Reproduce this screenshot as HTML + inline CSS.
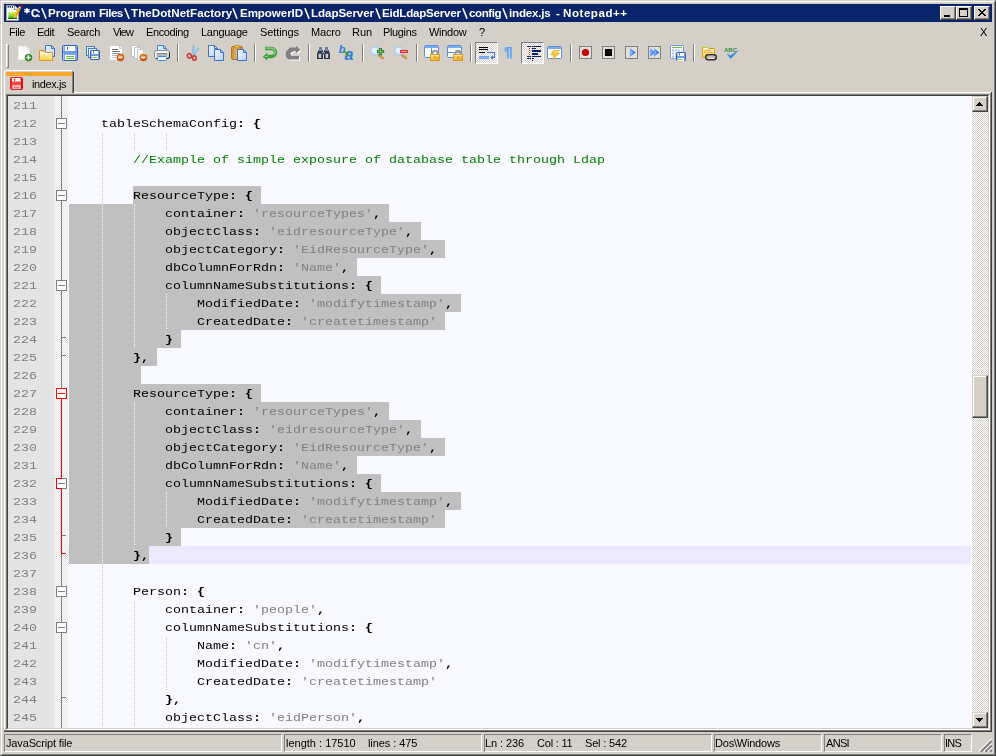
<!DOCTYPE html><html><head><meta charset="utf-8"><title>Notepad++</title><style>
*{box-sizing:border-box;margin:0;padding:0}
html,body{width:996px;height:756px;overflow:hidden;background:#d4d0c8}
body{position:relative;font-family:"Liberation Sans",sans-serif;font-size:11px;color:#000}
.a{position:absolute}
.t{position:absolute;white-space:pre;line-height:13px;height:13px;will-change:transform}
.ln{position:absolute;left:13px;width:30px;height:18px;font-family:"Liberation Mono",monospace;font-size:11.5px;line-height:18px;padding-top:1px;color:#808080;white-space:pre;transform:scaleX(1.15942);transform-origin:0 0;will-change:transform}
.cl{position:absolute;left:69px;height:18px;font-family:"Liberation Mono",monospace;font-size:11.5px;line-height:18px;padding-top:1px;color:#000;white-space:pre;transform:scaleX(1.15942);transform-origin:0 0;will-change:transform}
.cl b{font-weight:bold}
.s{color:#808080}
.c{color:#008000}
.sel{position:absolute;background:#c0c0c0;height:18px}
.g{position:absolute;width:1px;background:repeating-linear-gradient(to bottom,#ffffff 0,#ffffff 1px,#c0c0c0 1px,#c0c0c0 2px)}
.fb{position:absolute;left:56px;width:11px;height:11px;border:1px solid #808080;background:#fff}
.fb i{position:absolute;left:1px;top:4px;width:7px;height:1px;background:#808080}
.sp{position:absolute;top:734px;height:18px;border:1px solid;border-color:#808080 #fff #fff #808080}
.sep{position:absolute;top:44px;width:2px;height:18px;border-left:1px solid #808080;border-right:1px solid #fff}
.cb{position:absolute;top:6px;width:16px;height:14px;background:#d4d0c8;border:1px solid;border-color:#fff #404040 #404040 #fff;box-shadow:inset -1px -1px 0 #808080, inset 1px 1px 0 #d4d0c8}
.ic{position:absolute;top:45px;width:16px;height:16px}
</style></head><body>
<div class="a" style="left:0;top:0;width:996px;height:756px;border:1px solid;border-color:#d4d0c8 #404040 #404040 #d4d0c8"></div>
<div class="a" style="left:1px;top:1px;width:994px;height:754px;border:1px solid;border-color:#fff #808080 #808080 #fff"></div>
<div class="a" style="left:4px;top:4px;width:988px;height:18px;background:#0a246a"></div>
<svg class="a" style="left:6px;top:5px;overflow:visible" width="16" height="16" viewBox="0 0 16 16"><defs><linearGradient id="tg" x1="0" y1="0" x2="0" y2="1"><stop offset="0" stop-color="#e4f26a"/><stop offset="0.55" stop-color="#7fd83a"/><stop offset="0.85" stop-color="#2fae1c"/><stop offset="0.86" stop-color="#0a5a08"/><stop offset="1" stop-color="#0a5a08"/></linearGradient></defs><path d="M0.5 0.5H8.5L12.5 4.5V15.5H0.5z" fill="#fff" stroke="#9c9c9c"/><path d="M8.5 0.5V4.5H12.5" fill="#fff" stroke="#8a8a8a"/><rect x="1.6" y="1" width="1.3" height="1.7" fill="#0a246a"/><rect x="3.7" y="1" width="1.3" height="1.7" fill="#0a246a"/><rect x="5.8" y="1" width="1.3" height="1.7" fill="#0a246a"/><rect x="2" y="4.4" width="5.5" height="1" fill="#dfeef4"/><rect x="2.3" y="7" width="8.6" height="7" fill="url(#tg)"/><path d="M8.9 12L13.3 3.6" stroke="#f6a400" stroke-width="3"/><path d="M8.4 11.4L12.6 3.4" stroke="#ffd040" stroke-width="1"/><path d="M7.4 13.6L8 11.2L10 12.4z" fill="#e8d0a0"/><path d="M7.4 13.6L7.8 12.6L8.6 13z" fill="#403020"/><path d="M13.3 3.4L14.3 1.8" stroke="#c4d0e4" stroke-width="2.6"/><rect x="14.2" y="0" width="2.2" height="2.2" fill="#c40000"/></svg>
<div class="t" id="t3" style="left:47.50px;top:6px;letter-spacing:0.000px;color:#fff;font-weight:bold;font-size:11.6px">Program</div>
<div class="t" id="t4" style="left:98.50px;top:6px;letter-spacing:-0.525px;color:#fff;font-weight:bold;font-size:11.6px">Files</div>
<div class="t" id="t6" style="left:130.50px;top:6px;letter-spacing:0.047px;color:#fff;font-weight:bold;font-size:11.6px">TheDotNetFactory</div>
<div class="t" id="t8" style="left:239.50px;top:6px;letter-spacing:-0.087px;color:#fff;font-weight:bold;font-size:11.6px">EmpowerID</div>
<div class="t" id="t10" style="left:310.50px;top:6px;letter-spacing:-0.078px;color:#fff;font-weight:bold;font-size:11.6px">LdapServer</div>
<div class="t" id="t12" style="left:381.50px;top:6px;letter-spacing:-0.233px;color:#fff;font-weight:bold;font-size:11.6px">EidLdapServer</div>
<div class="t" id="t14" style="left:468.50px;top:6px;letter-spacing:-0.420px;color:#fff;font-weight:bold;font-size:11.6px">config</div>
<div class="t" id="t16" style="left:508.50px;top:6px;letter-spacing:-0.200px;color:#fff;font-weight:bold;font-size:11.6px">index.js</div>
<div class="t" id="t17" style="left:555.50px;top:6px;letter-spacing:0.000px;color:#fff;font-weight:bold;font-size:11.6px">-</div>
<div class="t" id="t18" style="left:562.50px;top:6px;letter-spacing:0.525px;color:#fff;font-weight:bold;font-size:11.6px">Notepad++</div>
<div class="t" style="left:31px;top:7px;color:#fff;font-weight:bold;font-size:10.8px;-webkit-text-stroke:0.25px #fff">C</div>
<div class="t" style="left:37.3px;top:6px;color:#fff;font-weight:bold;font-size:11.6px">:</div>
<svg class="a" style="left:0;top:0" width="640" height="24"><path d="M41.9 8.2L46.1 18.8" stroke="#fff" stroke-width="1.6"/><path d="M124.9 8.2L129.1 18.8" stroke="#fff" stroke-width="1.6"/><path d="M232.9 8.2L237.1 18.8" stroke="#fff" stroke-width="1.6"/><path d="M304.9 8.2L309.1 18.8" stroke="#fff" stroke-width="1.6"/><path d="M375.9 8.2L380.1 18.8" stroke="#fff" stroke-width="1.6"/><path d="M462.9 8.2L467.1 18.8" stroke="#fff" stroke-width="1.6"/><path d="M502.9 8.2L507.1 18.8" stroke="#fff" stroke-width="1.6"/><path d="M27 8v5.4M24.4 9.4l5.2 2.6M29.6 9.4l-5.2 2.6" stroke="#fff" stroke-width="1.5"/></svg>
<div class="cb" style="left:940px"><div class="a" style="left:3px;top:8px;width:6px;height:2px;background:#000"></div></div>
<div class="cb" style="left:956px"><div class="a" style="left:2px;top:1px;width:9px;height:9px;border:1px solid #000;border-top-width:2px"></div></div>
<div class="cb" style="left:974px"><svg class="a" style="left:3px;top:2px" width="8" height="7" viewBox="0 0 8 7" shape-rendering="crispEdges"><path d="M0 0h2v1h-2zM6 0h2v1h-2zM1 1h2v1h-2zM5 1h2v1h-2zM2 2h4v1h-4zM3 3h2v1h-2zM2 4h4v1h-4zM1 5h2v1h-2zM5 5h2v1h-2zM0 6h2v1h-2zM6 6h2v1h-2z" fill="#000"/></svg></div>
<div class="t" id="m0" style="left:8.50px;top:26px;letter-spacing:-0.467px;">File</div>
<div class="t" id="m1" style="left:36.50px;top:26px;letter-spacing:-0.467px;">Edit</div>
<div class="t" id="m2" style="left:66.50px;top:26px;letter-spacing:-0.280px;">Search</div>
<div class="t" id="m3" style="left:112.50px;top:26px;letter-spacing:-0.934px;">View</div>
<div class="t" id="m4" style="left:145.50px;top:26px;letter-spacing:-0.400px;">Encoding</div>
<div class="t" id="m5" style="left:200.50px;top:26px;letter-spacing:-0.300px;">Language</div>
<div class="t" id="m6" style="left:259.50px;top:26px;letter-spacing:-0.100px;">Settings</div>
<div class="t" id="m7" style="left:310.50px;top:26px;letter-spacing:-0.175px;">Macro</div>
<div class="t" id="m8" style="left:351.50px;top:26px;letter-spacing:0.000px;">Run</div>
<div class="t" id="m9" style="left:382.50px;top:26px;letter-spacing:-0.350px;">Plugins</div>
<div class="t" id="m10" style="left:428.50px;top:26px;letter-spacing:-0.280px;">Window</div>
<div class="t" id="m11" style="left:478.50px;top:26px;letter-spacing:0.000px;">?</div>
<div class="t" id="mx" style="left:979.50px;top:26px;letter-spacing:0.000px;">X</div>
<div class="a" style="left:6px;top:44px;width:3px;height:24px;border:1px solid;border-color:#fff #808080 #808080 #fff"></div>
<div class="sep" style="left:177px"></div>
<div class="sep" style="left:254px"></div>
<div class="sep" style="left:308px"></div>
<div class="sep" style="left:362px"></div>
<div class="sep" style="left:416px"></div>
<div class="sep" style="left:470px"></div>
<div class="sep" style="left:570px"></div>
<div class="sep" style="left:693px"></div>
<div class="a" style="left:475px;top:42px;width:23px;height:22px;border:1px solid;border-color:#808080 #fff #fff #808080;background-color:#fff;background-image:conic-gradient(#fff 25%,#d4d0c8 0 50%,#fff 0 75%,#d4d0c8 0);background-size:2px 2px"></div>
<div class="a" style="left:521px;top:42px;width:23px;height:22px;border:1px solid;border-color:#808080 #fff #fff #808080;background-color:#fff;background-image:conic-gradient(#fff 25%,#d4d0c8 0 50%,#fff 0 75%,#d4d0c8 0);background-size:2px 2px"></div>
<svg class="a" style="left:0;top:0" width="0" height="0"><defs><linearGradient id="gb" x1="0" y1="0" x2="1" y2="1"><stop offset="0" stop-color="#eef4fe"/><stop offset="1" stop-color="#bcd3f8"/></linearGradient><linearGradient id="gf" x1="0" y1="0" x2="0" y2="1"><stop offset="0" stop-color="#fffbe8"/><stop offset="1" stop-color="#f8d040"/></linearGradient><linearGradient id="gl" x1="0" y1="0" x2="1" y2="1"><stop offset="0" stop-color="#fbe07a"/><stop offset="1" stop-color="#eaa21c"/></linearGradient><radialGradient id="go" cx="0.4" cy="0.3" r="0.8"><stop offset="0" stop-color="#f58a30"/><stop offset="1" stop-color="#c84400"/></radialGradient><radialGradient id="gg" cx="0.4" cy="0.3" r="0.8"><stop offset="0" stop-color="#58b848"/><stop offset="1" stop-color="#2a7a1e"/></radialGradient><radialGradient id="gm" cx="0.4" cy="0.35" r="0.7"><stop offset="0" stop-color="#f4f9ff"/><stop offset="1" stop-color="#c4dcf8"/></radialGradient><linearGradient id="gc" x1="0" y1="0" x2="1" y2="0"><stop offset="0" stop-color="#c88a34"/><stop offset="0.5" stop-color="#ecb562"/><stop offset="1" stop-color="#c07a22"/></linearGradient><linearGradient id="gp" x1="0" y1="0" x2="0" y2="1"><stop offset="0" stop-color="#f4f4f4"/><stop offset="0.5" stop-color="#c8c8c8"/><stop offset="1" stop-color="#e8e8e8"/></linearGradient><linearGradient id="gt" x1="0" y1="0" x2="1" y2="0"><stop offset="0" stop-color="#7ab4ff"/><stop offset="1" stop-color="#1458d8"/></linearGradient></defs></svg>
<svg class="a" style="left:16px;top:45px;overflow:visible" width="16" height="16" viewBox="0 0 16 16"><path d="M2.5 1.5H10.5L13.5 4.5V14.5H2.5z" fill="#fff" stroke="#ececec"/><path d="M10.5 1.5V4.5H13.5" fill="none" stroke="#ececec"/><path d="M4 3h5M5 5h5" stroke="#eeeeee"/><circle cx="12.5" cy="12.6" r="3.4" fill="url(#gg)" stroke="#2d7d22" stroke-width=".8"/><path d="M12.5 10.6v4M10.5 12.6h4" stroke="#fff" stroke-width="1.4"/></svg>
<svg class="a" style="left:39px;top:45px;overflow:visible" width="16" height="16" viewBox="0 0 16 16"><path d="M6.5 0.5H12.5L15.5 3.5V11.5H6.5z" fill="url(#gb)" stroke="#3c74d4"/><path d="M12.5 0.5V3.5H15.5" fill="none" stroke="#3c74d4"/><path d="M0.5 5.5H5.5L6.5 7.5H13.5V15.5H0.5z" fill="url(#gf)" stroke="#e4942a"/><path d="M1.5 8.5H12.5" stroke="#fff"/><path d="M2 6.5H5" stroke="#f6c070"/></svg>
<svg class="a" style="left:62px;top:45px;overflow:visible" width="16" height="16" viewBox="0 0 16 16"><rect x="0.5" y="0.5" width="15" height="15" rx="1.2" fill="#7ba7e8" stroke="#2f62bd"/><rect x="1" y="1" width="1" height="14" fill="#a9c6f2"/><rect x="3" y="1" width="10" height="5" fill="#fff"/><rect x="5" y="2.0" width="1" height="3" fill="#2f62bd"/><rect x="1" y="6" width="14" height="2" fill="#6c9be2"/><rect x="3" y="10" width="10" height="5" fill="#fff"/><rect x="4" y="11" width="8" height="1" fill="#6fc244"/><rect x="4" y="13" width="8" height="1" fill="#6fc244"/></svg>
<svg class="a" style="left:85px;top:45px;overflow:visible" width="16" height="16" viewBox="0 0 16 16"><rect x="1.5" y="1.5" width="8" height="9" fill="#e8f0fc" stroke="#4a7ad0"/><rect x="3.5" y="3.5" width="8" height="9" fill="#e8f0fc" stroke="#4a7ad0"/><rect x="5.5" y="5.5" width="9" height="9" rx="0.75" fill="#7ba7e8" stroke="#2f62bd"/><rect x="6" y="6" width="1" height="8" fill="#a9c6f2"/><rect x="7" y="6" width="6" height="3" fill="#fff"/><rect x="8" y="6.25" width="1" height="2" fill="#2f62bd"/><rect x="6" y="9" width="8" height="2" fill="#6c9be2"/><rect x="7" y="11" width="6" height="3" fill="#fff"/><rect x="7" y="12" width="5" height="1" fill="#8fd23c"/></svg>
<svg class="a" style="left:108px;top:45px;overflow:visible" width="16" height="16" viewBox="0 0 16 16"><path d="M1.5 0.5H11.5L14.5 3.5V15.5H1.5z" fill="#fff" stroke="#d0d0d0"/><path d="M11.5 0.5V3.5H14.5" fill="none" stroke="#d0d0d0"/><path d="M4 4.5h6" stroke="#6a6a6a"/><path d="M4 6.5h8" stroke="#747474"/><path d="M4 8.5h8" stroke="#8c98a8"/><path d="M4 10.5h5" stroke="#b4bcc8"/><path d="M4 12.5h4" stroke="#d0d0d0"/><circle cx="12.4" cy="12.4" r="3.5" fill="url(#go)" stroke="#c04a00" stroke-width=".6"/><rect x="10.3" y="11.6" width="4.2" height="1.6" fill="#fff"/></svg>
<svg class="a" style="left:131px;top:45px;overflow:visible" width="16" height="16" viewBox="0 0 16 16"><path d="M0.5 0.5H6.5L8.5 2.5V11.5H0.5z" fill="#fff" stroke="#c4c4c4"/><path d="M6.5 0.5V2.5H8.5" fill="none" stroke="#c4c4c4"/><path d="M3.5 2.5H9.5L11.5 4.5V13.5H3.5z" fill="#fff" stroke="#c4c4c4"/><path d="M9.5 2.5V4.5H11.5" fill="none" stroke="#c4c4c4"/><path d="M6.5 4.5H12.5L15.5 7.5V15.5H6.5z" fill="#fff" stroke="#c4c4c4"/><path d="M12.5 4.5V7.5H15.5" fill="none" stroke="#c4c4c4"/><circle cx="12.3" cy="12.4" r="3.5" fill="url(#go)" stroke="#c04a00" stroke-width=".6"/><rect x="10.2" y="11.6" width="4.2" height="1.6" fill="#fff"/></svg>
<svg class="a" style="left:154px;top:45px;overflow:visible" width="16" height="16" viewBox="0 0 16 16"><path d="M3.5 0.5H9.5L12.5 3.5V7.5H3.5z" fill="url(#gb)" stroke="#3c84dc"/><path d="M9.5 0.5V3.5H12.5" fill="none" stroke="#3c84dc"/><rect x="0.5" y="5.5" width="15" height="8" rx="2" fill="url(#gp)" stroke="#8c8c8c"/><path d="M15.5 7.5v4.5a1.5 1.5 0 0 1 -1.5 1.5H2" stroke="#2a2a2a" stroke-width="1" fill="none"/><path d="M1.5 7.5v5" stroke="#fff" stroke-width="1"/><rect x="3" y="6" width="10" height="2" fill="#f4f6fa"/><rect x="3" y="8" width="10" height="3" fill="#b4b4b4"/><rect x="3" y="8" width="10" height="1" fill="#8a8a8a"/><rect x="3.5" y="11.5" width="9" height="4" rx="1" fill="#f4f8ff" stroke="#3c84dc"/></svg>
<svg class="a" style="left:185px;top:45px;overflow:visible" width="16" height="16" viewBox="0 0 16 16"><path d="M8.3 0.5L7.2 11" stroke="#9cc8f0" stroke-width="1.6" fill="none"/><path d="M8.9 0.8L8 10" stroke="#5c98d8" stroke-width=".6"/><path d="M13.6 2.4L7.3 11" stroke="#a8d0f4" stroke-width="1.8" fill="none"/><path d="M13.9 3.2L8.4 10.6" stroke="#5c98d8" stroke-width=".6"/><ellipse cx="4.4" cy="10.9" rx="2" ry="2.3" transform="rotate(-30 4.4 10.9)" fill="none" stroke="#d03028" stroke-width="1.5"/><ellipse cx="9.4" cy="13" rx="1.8" ry="2.3" transform="rotate(-10 9.4 13)" fill="none" stroke="#d03028" stroke-width="1.5"/></svg>
<svg class="a" style="left:208px;top:45px;overflow:visible" width="16" height="16" viewBox="0 0 16 16"><path d="M0.5 0.5H6.5L9.5 3.5V11.5H0.5z" fill="url(#gb)" stroke="#3c74d4"/><path d="M6.5 0.5V3.5H9.5" fill="none" stroke="#3c74d4"/><path d="M6.5 4.5H12.5L15.5 7.5V15.5H6.5z" fill="url(#gb)" stroke="#3c74d4"/><path d="M12.5 4.5V7.5H15.5" fill="none" stroke="#3c74d4"/></svg>
<svg class="a" style="left:231px;top:45px;overflow:visible" width="16" height="16" viewBox="0 0 16 16"><rect x="0.5" y="1.5" width="11" height="13" rx="1.5" fill="url(#gc)" stroke="#b47420"/><rect x="3.5" y="0.5" width="5" height="2.5" rx=".8" fill="#f2c24c" stroke="#b47c1c" stroke-width=".8"/><path d="M6.5 4.5H12.5L15.5 7.5V15.5H6.5z" fill="url(#gb)" stroke="#3c74d4"/><path d="M12.5 4.5V7.5H15.5" fill="none" stroke="#3c74d4"/></svg>
<svg class="a" style="left:262px;top:45px;overflow:visible" width="16" height="16" viewBox="0 0 16 16"><path d="M3 3.5H9.5A4 4 0 0 1 9.5 11.5H5" fill="none" stroke="#3f9f3f" stroke-width="3.4"/><path d="M0.8 11.8L5.4 7.6V15.8z" fill="#3f9f3f"/><path d="M3.4 3.1H9.5A4 4 0 0 1 12 10" fill="none" stroke="#8ed68a" stroke-width="1.2"/><path d="M2.6 11.4H6" stroke="#7ccc78" stroke-width="1.2"/></svg>
<svg class="a" style="left:285px;top:45px;overflow:visible" width="16" height="16" viewBox="0 0 16 16"><path d="M5 2.6H10.9L11.4 0.9L15.4 4.9L10.9 8.2V6.3H8.4L5.5 8V9.1L6.7 11H14V14.4H3.3L0.8 11.6V6.8z" fill="#fff" transform="translate(1,1)"/><path d="M5 2.6H10.9L11.4 0.9L15.4 4.9L10.9 8.2V6.3H8.4L5.5 8V9.1L6.7 11H14V14.4H3.3L0.8 11.6V6.8z" fill="#808080"/></svg>
<svg class="a" style="left:316px;top:45px;overflow:visible" width="16" height="16" viewBox="0 0 16 16"><rect x="3" y="2" width="3" height="3" fill="#6a86a6"/><rect x="9" y="2" width="3" height="3" fill="#6a86a6"/><path d="M2 5h5v2h1V5h5v2l1 1v6H8V9H7v5H1V8l1-1z" fill="#2b323b"/><path d="M2.5 5.5h4M8.5 5.5h4" stroke="#7d92aa"/><path d="M6 7.5h3" stroke="#8ea4bc"/><rect x="1" y="7.6" width="6" height="1" fill="#56657a"/><rect x="8" y="7.6" width="6" height="1" fill="#56657a"/><rect x="3" y="9" width="2.2" height="4" fill="#c4d0de"/><rect x="10" y="9" width="2.2" height="4" fill="#c4d0de"/><rect x="2" y="9" width="1" height="4" fill="#6b7b8e"/><rect x="9" y="9" width="1" height="4" fill="#6b7b8e"/></svg>
<svg class="a" style="left:339px;top:45px;overflow:visible" width="16" height="16" viewBox="0 0 16 16"><text x="-0.3" y="8.2" font-family="Liberation Sans,sans-serif" font-style="italic" font-weight="bold" font-size="11" fill="#2c7ce6">b</text><text x="5.4" y="15.4" font-family="Liberation Sans,sans-serif" font-style="italic" font-weight="bold" font-size="16" fill="#2c7ce6">a</text><path d="M4.5 5.5L8.5 9.5" stroke="#3a9c3a" stroke-width="1.6"/><path d="M10 11L5.6 10.2L9.4 6.6z" fill="#3a9c3a"/></svg>
<svg class="a" style="left:370px;top:45px;overflow:visible" width="16" height="16" viewBox="0 0 16 16"><path d="M9 10.2L12.6 13" stroke="#c48a3c" stroke-width="2.6" stroke-linecap="round"/><path d="M9.6 10.2L12.4 12.4" stroke="#e8c080" stroke-width=".8"/><circle cx="4.8" cy="6" r="4.2" fill="url(#gm)" stroke="#a8c8ee" stroke-width="1.3"/><path d="M10.5 3v7.2M7 6.6h7.2" stroke="#2f8a2f" stroke-width="3"/><path d="M10.5 4v5M8 6.6h5" stroke="#7cc47c" stroke-width="1"/></svg>
<svg class="a" style="left:393px;top:45px;overflow:visible" width="16" height="16" viewBox="0 0 16 16"><path d="M9.4 10.2L13 13" stroke="#c48a3c" stroke-width="2.6" stroke-linecap="round"/><path d="M10 10.2L12.8 12.4" stroke="#e8c080" stroke-width=".8"/><circle cx="5.8" cy="6" r="4.2" fill="url(#gm)" stroke="#a8c8ee" stroke-width="1.3"/><rect x="7" y="5" width="8" height="3" fill="#e82424"/><rect x="8" y="6" width="6" height="1" fill="#ff9a9a"/></svg>
<svg class="a" style="left:424px;top:45px;overflow:visible" width="16" height="16" viewBox="0 0 16 16"><rect x="0.5" y="0.5" width="14" height="12" rx="1.2" fill="#fff" stroke="#5b8edc"/><rect x="1" y="1" width="13" height="2" fill="#79aef2"/><rect x="7" y="3" width="1" height="9" fill="#5b8edc"/><path d="M8.5 9.5V8.3a2.5 2.5 0 0 1 5 0V9.5" fill="none" stroke="#9a9a9a" stroke-width="2"/><rect x="6.5" y="9.5" width="9" height="6" fill="url(#gl)" stroke="#e09a1a"/><rect x="7" y="10" width="8" height="1" fill="#fdeaa0"/><rect x="10.5" y="11.5" width="1" height="2" fill="#b87a10"/></svg>
<svg class="a" style="left:447px;top:45px;overflow:visible" width="16" height="16" viewBox="0 0 16 16"><rect x="0.5" y="0.5" width="14" height="12" rx="1.2" fill="#fff" stroke="#5b8edc"/><rect x="1" y="1" width="13" height="2" fill="#79aef2"/><rect x="1" y="7" width="13" height="1" fill="#5b8edc"/><path d="M8.5 9.5V8.3a2.5 2.5 0 0 1 5 0V9.5" fill="none" stroke="#9a9a9a" stroke-width="2"/><rect x="6.5" y="9.5" width="9" height="6" fill="url(#gl)" stroke="#e09a1a"/><rect x="7" y="10" width="8" height="1" fill="#fdeaa0"/><rect x="10.5" y="11.5" width="1" height="2" fill="#b87a10"/></svg>
<svg class="a" style="left:479px;top:46px;overflow:visible" width="16" height="16" viewBox="0 0 16 16"><g shape-rendering="crispEdges"><rect x="0" y="1" width="9" height="1" fill="#000"/><rect x="0" y="3" width="9" height="1" fill="#000"/><rect x="0" y="6" width="6" height="1" fill="#000"/><rect x="0" y="10" width="10" height="3" fill="#6ea4ee"/><rect x="0" y="11" width="10" height="1" fill="#8cbaf4"/><rect x="8" y="6" width="8" height="1" fill="#3a78d8"/><rect x="15" y="6" width="1" height="6" fill="#3a78d8"/><rect x="13" y="11" width="3" height="1" fill="#3a78d8"/></g><path d="M11.4 11.5L14 9V14z" fill="#3a78d8"/></svg>
<svg class="a" style="left:501px;top:45px;overflow:visible" width="16" height="16" viewBox="0 0 16 16"><path d="M6 2H11V3.5H10.8V13.5H9V3.5H7.8V13.5H6V7.2A2.6 2.6 0 0 1 6 2z" fill="#5fa6f4"/><path d="M5.2 3.3a1.6 1.6 0 0 0 .3 2.8" stroke="#a8d0fa" fill="none" stroke-width=".8"/></svg>
<svg class="a" style="left:525px;top:46px;overflow:visible" width="16" height="16" viewBox="0 0 16 16"><g shape-rendering="crispEdges" fill="#0a246a"><rect x="2" y="0" width="4" height="1"/><rect x="7" y="0" width="9" height="1"/><rect x="7" y="2" width="4" height="1"/><rect x="7" y="4" width="9" height="2"/><rect x="7" y="7" width="6" height="2"/><rect x="2" y="10" width="4" height="1"/><rect x="7" y="10" width="9" height="1"/><rect x="2" y="12" width="4" height="1"/><rect x="7" y="12" width="2" height="1"/><rect x="7" y="14" width="1" height="1"/><rect x="4" y="2" width="1" height="1" fill="#f00"/><rect x="4" y="4" width="1" height="1" fill="#f00"/><rect x="4" y="6" width="1" height="1" fill="#f00"/><rect x="4" y="8" width="1" height="1" fill="#f00"/></g></svg>
<svg class="a" style="left:547px;top:45px;overflow:visible" width="16" height="16" viewBox="0 0 16 16"><rect x="0.5" y="1.5" width="14" height="12" rx="1.2" fill="#fff" stroke="#5b8edc"/><rect x="1" y="2" width="13" height="2" fill="#79aef2"/><path d="M6.5 5H12.5L10 8H12.8L5 15L7 10H3.6z" fill="#f2c332" stroke="#e0a820" stroke-width=".5"/><path d="M7 6H10.5L8 9" stroke="#fbe690" fill="none" stroke-width=".8"/></svg>
<svg class="a" style="left:578px;top:45px;overflow:visible" width="16" height="16" viewBox="0 0 16 16"><rect x="1.5" y="1.5" width="12" height="12" fill="#e3e0d9" stroke="#808080"/><circle cx="7.5" cy="7.5" r="3.6" fill="#c40000"/></svg>
<svg class="a" style="left:601px;top:45px;overflow:visible" width="16" height="16" viewBox="0 0 16 16"><rect x="1.5" y="1.5" width="12" height="12" fill="#e3e0d9" stroke="#808080"/><rect x="4" y="4" width="7" height="7" fill="#000"/></svg>
<svg class="a" style="left:624px;top:45px;overflow:visible" width="16" height="16" viewBox="0 0 16 16"><rect x="1.5" y="1.5" width="12" height="12" fill="#e3e0d9" stroke="#808080"/><path d="M5.8 3L11.6 7.5L5.8 12z" fill="url(#gt)"/><path d="M7 6L9.2 7.6L7 9.4z" fill="#8cbcff"/></svg>
<svg class="a" style="left:647px;top:45px;overflow:visible" width="16" height="16" viewBox="0 0 16 16"><rect x="1.5" y="1.5" width="12" height="12" fill="#e3e0d9" stroke="#808080"/><path d="M2.8 3L8 7.5L2.8 12z" fill="url(#gt)"/><path d="M6.8 3L12.2 7.5L6.8 12z" fill="url(#gt)"/><path d="M4 6.2L5.6 7.6L4 9z M8 6.2L9.6 7.6L8 9z" fill="#8cbcff"/></svg>
<svg class="a" style="left:670px;top:45px;overflow:visible" width="16" height="16" viewBox="0 0 16 16"><rect x="0.5" y="0.5" width="13" height="13" rx="1" fill="#fff" stroke="#6c9ce4"/><rect x="2" y="2" width="10" height="1" fill="#6fc244"/><path d="M2 5.5h10M2 8.5h5M2 11.5h5" stroke="#a8c4f0" stroke-width="2" stroke-dasharray="2 1"/><rect x="6.5" y="7.5" width="9" height="8" rx="0.75" fill="#7ba7e8" stroke="#2f62bd"/><rect x="7" y="8" width="1" height="8" fill="#a9c6f2"/><rect x="8" y="8" width="6" height="3" fill="#fff"/><rect x="9" y="8.25" width="1" height="2" fill="#2f62bd"/><rect x="7" y="11" width="8" height="2" fill="#6c9be2"/><rect x="8" y="13" width="6" height="3" fill="#fff"/><rect x="8" y="14" width="5" height="1" fill="#8fd23c"/></svg>
<svg class="a" style="left:701px;top:45px;overflow:visible" width="16" height="16" viewBox="0 0 16 16"><path d="M1.5 2.5H6.5L7.5 3.5H13.5V12.5H1.5z" fill="url(#gf)" stroke="#e0a01c"/><path d="M3 5.5h7M3 7.5h9" stroke="#f6a838" stroke-width="1"/><path d="M1.5 2.5H6.5" stroke="#d4c020"/><rect x="4.7" y="9.7" width="10.6" height="5" rx="2.5" fill="#efefef" stroke="#2a2a2a" stroke-width="1.4"/><rect x="7" y="11.6" width="6" height="1.2" fill="#fff" stroke="#888" stroke-width=".5"/><rect x="6" y="11.5" width="1" height="1.4" fill="#e8a020"/><rect x="13" y="11.5" width="1" height="1.4" fill="#e8a020"/></svg>
<svg class="a" style="left:724px;top:45px;overflow:visible" width="16" height="16" viewBox="0 0 16 16"><text x="0" y="6.6" font-family="Liberation Sans,sans-serif" font-weight="bold" font-size="6.2" fill="#2f8f3f" textLength="13" lengthAdjust="spacingAndGlyphs">ABC</text><path d="M2.4 8.2L6.2 10.6L15.2 4.8L6.6 14z" fill="#2a8ce8"/></svg>
<div class="a" style="left:4px;top:71px;width:68px;height:23px;background:#d4d0c8;border-left:1px solid #fff"></div><div class="a" style="left:5px;top:70px;width:67px;height:1px;background:#fff"></div>
<div class="a" style="left:6px;top:72px;width:66px;height:4px;background:#ffa62f"></div>
<div class="a" style="left:72px;top:71px;width:1px;height:22px;background:#808080"></div>
<div class="a" style="left:73px;top:72px;width:1px;height:21px;background:#404040"></div>
<svg class="a" style="left:10px;top:77px" width="13" height="13" viewBox="0 0 13 13"><rect x="0.5" y="0.5" width="12" height="12" rx="1.2" fill="#f86060" stroke="#e61a1a"/><rect x="11" y="1" width="1.5" height="11" fill="#e00808"/><rect x="1" y="1" width="1" height="11" fill="#f43030"/><rect x="2" y="1" width="8.5" height="3.3" fill="#fff"/><rect x="4" y="1.4" width="1.2" height="2.6" fill="#e62020"/><rect x="2" y="5.2" width="9" height="2.6" fill="#f24444"/><rect x="2.5" y="8.4" width="8" height="3.4" fill="#fde4e4"/><rect x="3.4" y="9.6" width="6.2" height="1.3" fill="#ee6a6a"/></svg>
<div class="t" id="tab" style="left:31.50px;top:78px;letter-spacing:-0.400px;">index.js</div>
<div class="a" style="left:74px;top:92px;width:918px;height:1px;background:#fff"></div>
<div class="a" style="left:4px;top:92px;width:1px;height:640px;background:#fff"></div>
<div class="a" style="left:4px;top:730px;width:988px;height:1px;background:#808080"></div>
<div class="a" style="left:4px;top:731px;width:988px;height:1px;background:#404040"></div>
<div class="a" style="left:990px;top:93px;width:1px;height:638px;background:#808080"></div>
<div class="a" style="left:991px;top:92px;width:1px;height:640px;background:#404040"></div>
<div class="a" style="left:6px;top:94px;width:984px;height:636px;border:1px solid;border-color:#808080 #fff #fff #808080"></div>
<div class="a" style="left:7px;top:95px;width:982px;height:634px;border:1px solid;border-color:#404040 #d4d0c8 #d4d0c8 #404040"></div>
<div class="a" id="ed" style="left:8px;top:96px;width:964px;height:632px;background:#f8f8ff;overflow:hidden"></div>
<div class="a" style="left:8px;top:96px;width:46px;height:632px;background:#e4e4e4"></div>
<div class="a" style="left:971px;top:96px;width:1px;height:632px;background:#fff"></div>
<div class="a" style="left:54px;top:96px;width:14px;height:632px;background-color:#fff;background-image:conic-gradient(#fff 25%,#e6e2e2 0 50%,#fff 0 75%,#e6e2e2 0);background-size:2px 2px"></div>
<div class="a" style="left:61px;top:96px;width:1px;height:632px;background:#808080"></div>
<div class="a" style="left:61px;top:399px;width:1px;height:155px;background:#ff0000"></div>
<div class="a" style="left:68px;top:546px;width:903px;height:18px;background:#ebe8ff"></div>
<div class="sel" style="left:133px;top:186px;width:128px"></div>
<div class="sel" style="left:69px;top:204px;width:320px"></div>
<div class="sel" style="left:69px;top:222px;width:352px"></div>
<div class="sel" style="left:69px;top:240px;width:376px"></div>
<div class="sel" style="left:69px;top:258px;width:288px"></div>
<div class="sel" style="left:69px;top:276px;width:312px"></div>
<div class="sel" style="left:69px;top:294px;width:392px"></div>
<div class="sel" style="left:69px;top:312px;width:376px"></div>
<div class="sel" style="left:69px;top:330px;width:112px"></div>
<div class="sel" style="left:69px;top:348px;width:88px"></div>
<div class="sel" style="left:69px;top:366px;width:72px"></div>
<div class="sel" style="left:69px;top:384px;width:192px"></div>
<div class="sel" style="left:69px;top:402px;width:320px"></div>
<div class="sel" style="left:69px;top:420px;width:352px"></div>
<div class="sel" style="left:69px;top:438px;width:376px"></div>
<div class="sel" style="left:69px;top:456px;width:288px"></div>
<div class="sel" style="left:69px;top:474px;width:312px"></div>
<div class="sel" style="left:69px;top:492px;width:392px"></div>
<div class="sel" style="left:69px;top:510px;width:376px"></div>
<div class="sel" style="left:69px;top:528px;width:112px"></div>
<div class="sel" style="left:69px;top:546px;width:80px"></div>
<div class="g" style="left:102px;top:132px;height:18px"></div>
<div class="g" style="left:134px;top:132px;height:18px"></div>
<div class="g" style="left:166px;top:132px;height:18px"></div>
<div class="g" style="left:102px;top:150px;height:18px"></div>
<div class="g" style="left:102px;top:168px;height:18px"></div>
<div class="g" style="left:102px;top:186px;height:18px"></div>
<div class="g" style="left:102px;top:204px;height:18px"></div>
<div class="g" style="left:134px;top:204px;height:18px"></div>
<div class="g" style="left:102px;top:222px;height:18px"></div>
<div class="g" style="left:134px;top:222px;height:18px"></div>
<div class="g" style="left:102px;top:240px;height:18px"></div>
<div class="g" style="left:134px;top:240px;height:18px"></div>
<div class="g" style="left:102px;top:258px;height:18px"></div>
<div class="g" style="left:134px;top:258px;height:18px"></div>
<div class="g" style="left:102px;top:276px;height:18px"></div>
<div class="g" style="left:134px;top:276px;height:18px"></div>
<div class="g" style="left:102px;top:294px;height:18px"></div>
<div class="g" style="left:134px;top:294px;height:18px"></div>
<div class="g" style="left:166px;top:294px;height:18px"></div>
<div class="g" style="left:102px;top:312px;height:18px"></div>
<div class="g" style="left:134px;top:312px;height:18px"></div>
<div class="g" style="left:166px;top:312px;height:18px"></div>
<div class="g" style="left:102px;top:330px;height:18px"></div>
<div class="g" style="left:134px;top:330px;height:18px"></div>
<div class="g" style="left:102px;top:348px;height:18px"></div>
<div class="g" style="left:102px;top:366px;height:18px"></div>
<div class="g" style="left:102px;top:384px;height:18px"></div>
<div class="g" style="left:102px;top:402px;height:18px"></div>
<div class="g" style="left:134px;top:402px;height:18px"></div>
<div class="g" style="left:102px;top:420px;height:18px"></div>
<div class="g" style="left:134px;top:420px;height:18px"></div>
<div class="g" style="left:102px;top:438px;height:18px"></div>
<div class="g" style="left:134px;top:438px;height:18px"></div>
<div class="g" style="left:102px;top:456px;height:18px"></div>
<div class="g" style="left:134px;top:456px;height:18px"></div>
<div class="g" style="left:102px;top:474px;height:18px"></div>
<div class="g" style="left:134px;top:474px;height:18px"></div>
<div class="g" style="left:102px;top:492px;height:18px"></div>
<div class="g" style="left:134px;top:492px;height:18px"></div>
<div class="g" style="left:166px;top:492px;height:18px"></div>
<div class="g" style="left:102px;top:510px;height:18px"></div>
<div class="g" style="left:134px;top:510px;height:18px"></div>
<div class="g" style="left:166px;top:510px;height:18px"></div>
<div class="g" style="left:102px;top:528px;height:18px"></div>
<div class="g" style="left:134px;top:528px;height:18px"></div>
<div class="g" style="left:102px;top:546px;height:18px"></div>
<div class="g" style="left:102px;top:564px;height:18px"></div>
<div class="g" style="left:102px;top:582px;height:18px"></div>
<div class="g" style="left:102px;top:600px;height:18px"></div>
<div class="g" style="left:134px;top:600px;height:18px"></div>
<div class="g" style="left:102px;top:618px;height:18px"></div>
<div class="g" style="left:134px;top:618px;height:18px"></div>
<div class="g" style="left:102px;top:636px;height:18px"></div>
<div class="g" style="left:134px;top:636px;height:18px"></div>
<div class="g" style="left:166px;top:636px;height:18px"></div>
<div class="g" style="left:102px;top:654px;height:18px"></div>
<div class="g" style="left:134px;top:654px;height:18px"></div>
<div class="g" style="left:166px;top:654px;height:18px"></div>
<div class="g" style="left:102px;top:672px;height:18px"></div>
<div class="g" style="left:134px;top:672px;height:18px"></div>
<div class="g" style="left:166px;top:672px;height:18px"></div>
<div class="g" style="left:102px;top:690px;height:18px"></div>
<div class="g" style="left:134px;top:690px;height:18px"></div>
<div class="g" style="left:102px;top:708px;height:18px"></div>
<div class="g" style="left:134px;top:708px;height:18px"></div>
<div class="ln" style="top:96px">211</div>
<div class="ln" style="top:114px">212</div>
<div class="cl" style="top:114px">    tableSchemaConfig<b>:</b> <b>{</b></div>
<div class="ln" style="top:132px">213</div>
<div class="ln" style="top:150px">214</div>
<div class="cl" style="top:150px">        <span class="c">//Example of simple exposure of database table through Ldap</span></div>
<div class="ln" style="top:168px">215</div>
<div class="ln" style="top:186px">216</div>
<div class="cl" style="top:186px">        ResourceType<b>:</b> <b>{</b></div>
<div class="ln" style="top:204px">217</div>
<div class="cl" style="top:204px">            container<b>:</b> <span class="s">&#x27;resourceTypes&#x27;</span><b>,</b></div>
<div class="ln" style="top:222px">218</div>
<div class="cl" style="top:222px">            objectClass<b>:</b> <span class="s">&#x27;eidresourceType&#x27;</span><b>,</b></div>
<div class="ln" style="top:240px">219</div>
<div class="cl" style="top:240px">            objectCategory<b>:</b> <span class="s">&#x27;EidResourceType&#x27;</span><b>,</b></div>
<div class="ln" style="top:258px">220</div>
<div class="cl" style="top:258px">            dbColumnForRdn<b>:</b> <span class="s">&#x27;Name&#x27;</span><b>,</b></div>
<div class="ln" style="top:276px">221</div>
<div class="cl" style="top:276px">            columnNameSubstitutions<b>:</b> <b>{</b></div>
<div class="ln" style="top:294px">222</div>
<div class="cl" style="top:294px">                ModifiedDate<b>:</b> <span class="s">&#x27;modifytimestamp&#x27;</span><b>,</b></div>
<div class="ln" style="top:312px">223</div>
<div class="cl" style="top:312px">                CreatedDate<b>:</b> <span class="s">&#x27;createtimestamp&#x27;</span></div>
<div class="ln" style="top:330px">224</div>
<div class="cl" style="top:330px">            <b>}</b></div>
<div class="ln" style="top:348px">225</div>
<div class="cl" style="top:348px">        <b>}</b><b>,</b></div>
<div class="ln" style="top:366px">226</div>
<div class="ln" style="top:384px">227</div>
<div class="cl" style="top:384px">        ResourceType<b>:</b> <b>{</b></div>
<div class="ln" style="top:402px">228</div>
<div class="cl" style="top:402px">            container<b>:</b> <span class="s">&#x27;resourceTypes&#x27;</span><b>,</b></div>
<div class="ln" style="top:420px">229</div>
<div class="cl" style="top:420px">            objectClass<b>:</b> <span class="s">&#x27;eidresourceType&#x27;</span><b>,</b></div>
<div class="ln" style="top:438px">230</div>
<div class="cl" style="top:438px">            objectCategory<b>:</b> <span class="s">&#x27;EidResourceType&#x27;</span><b>,</b></div>
<div class="ln" style="top:456px">231</div>
<div class="cl" style="top:456px">            dbColumnForRdn<b>:</b> <span class="s">&#x27;Name&#x27;</span><b>,</b></div>
<div class="ln" style="top:474px">232</div>
<div class="cl" style="top:474px">            columnNameSubstitutions<b>:</b> <b>{</b></div>
<div class="ln" style="top:492px">233</div>
<div class="cl" style="top:492px">                ModifiedDate<b>:</b> <span class="s">&#x27;modifytimestamp&#x27;</span><b>,</b></div>
<div class="ln" style="top:510px">234</div>
<div class="cl" style="top:510px">                CreatedDate<b>:</b> <span class="s">&#x27;createtimestamp&#x27;</span></div>
<div class="ln" style="top:528px">235</div>
<div class="cl" style="top:528px">            <b>}</b></div>
<div class="ln" style="top:546px">236</div>
<div class="cl" style="top:546px">        <b>}</b><b>,</b></div>
<div class="ln" style="top:564px">237</div>
<div class="ln" style="top:582px">238</div>
<div class="cl" style="top:582px">        Person<b>:</b> <b>{</b></div>
<div class="ln" style="top:600px">239</div>
<div class="cl" style="top:600px">            container<b>:</b> <span class="s">&#x27;people&#x27;</span><b>,</b></div>
<div class="ln" style="top:618px">240</div>
<div class="cl" style="top:618px">            columnNameSubstitutions<b>:</b> <b>{</b></div>
<div class="ln" style="top:636px">241</div>
<div class="cl" style="top:636px">                Name<b>:</b> <span class="s">&#x27;cn&#x27;</span><b>,</b></div>
<div class="ln" style="top:654px">242</div>
<div class="cl" style="top:654px">                ModifiedDate<b>:</b> <span class="s">&#x27;modifytimestamp&#x27;</span><b>,</b></div>
<div class="ln" style="top:672px">243</div>
<div class="cl" style="top:672px">                CreatedDate<b>:</b> <span class="s">&#x27;createtimestamp&#x27;</span></div>
<div class="ln" style="top:690px">244</div>
<div class="cl" style="top:690px">            <b>}</b><b>,</b></div>
<div class="ln" style="top:708px">245</div>
<div class="cl" style="top:708px">            objectClass<b>:</b> <span class="s">&#x27;eidPerson&#x27;</span><b>,</b></div>
<div class="fb" style="top:118px;border-color:#808080"><i style="background:#808080"></i></div>
<div class="fb" style="top:190px;border-color:#808080"><i style="background:#808080"></i></div>
<div class="fb" style="top:280px;border-color:#808080"><i style="background:#808080"></i></div>
<div class="fb" style="top:388px;border-color:#ff0000"><i style="background:#ff0000"></i></div>
<div class="fb" style="top:478px;border-color:#808080"><i style="background:#808080"></i></div>
<div class="fb" style="top:586px;border-color:#808080"><i style="background:#808080"></i></div>
<div class="fb" style="top:622px;border-color:#808080"><i style="background:#808080"></i></div>
<div class="a" style="left:62px;top:337px;width:4px;height:1px;background:#808080"></div>
<div class="a" style="left:62px;top:355px;width:4px;height:1px;background:#808080"></div>
<div class="a" style="left:62px;top:535px;width:4px;height:1px;background:#808080"></div>
<div class="a" style="left:62px;top:697px;width:4px;height:1px;background:#808080"></div>
<div class="a" style="left:62px;top:553px;width:4px;height:1px;background:#ff0000"></div>
<div class="a" style="left:56px;top:478px;width:6px;height:11px;border:1px solid #ff0000;border-right:none"></div>
<div class="a" style="left:972px;top:96px;width:16px;height:632px;background-color:#fff;background-image:conic-gradient(#fff 25%,#d4d0c8 0 50%,#fff 0 75%,#d4d0c8 0);background-size:2px 2px"></div>
<div class="a" style="left:972px;top:96px;width:16px;height:16px;background:#d4d0c8;border:1px solid;border-color:#d4d0c8 #404040 #404040 #d4d0c8;box-shadow:inset -1px -1px 0 #808080, inset 1px 1px 0 #fff"><svg class="a" style="left:3px;top:5px" width="7" height="4" viewBox="0 0 7 4" shape-rendering="crispEdges"><path d="M3 0h1v1h-1zM2 1h3v1h-3zM1 2h5v1h-5zM0 3h7v1h-7z" fill="#000"/></svg></div>
<div class="a" style="left:972px;top:712px;width:16px;height:16px;background:#d4d0c8;border:1px solid;border-color:#d4d0c8 #404040 #404040 #d4d0c8;box-shadow:inset -1px -1px 0 #808080, inset 1px 1px 0 #fff"><svg class="a" style="left:3px;top:5px" width="7" height="4" viewBox="0 0 7 4" shape-rendering="crispEdges"><path d="M0 0h7v1h-7zM1 1h5v1h-5zM2 2h3v1h-3zM3 3h1v1h-1z" fill="#000"/></svg></div>
<div class="a" id="thumb" style="left:972px;top:375px;width:16px;height:43px;background:#d4d0c8;border:1px solid;border-color:#d4d0c8 #404040 #404040 #d4d0c8;box-shadow:inset -1px -1px 0 #808080, inset 1px 1px 0 #fff"></div>
<div class="sp" style="left:4px;width:278px"></div>
<div class="sp" style="left:284px;width:198px"></div>
<div class="sp" style="left:484px;width:228px"></div>
<div class="sp" style="left:714px;width:108px"></div>
<div class="sp" style="left:824px;width:118px"></div>
<div class="sp" style="left:944px;width:28px"></div>
<div class="t" id="s0" style="left:5.50px;top:737px;letter-spacing:-0.150px;">JavaScript file</div>
<div class="t" id="s1a" style="left:285.50px;top:737px;letter-spacing:0.000px;">length : 17510</div>
<div class="t" id="s1b" style="left:367.50px;top:737px;letter-spacing:-0.070px;">lines : 475</div>
<div class="t" id="s2a" style="left:484.50px;top:737px;letter-spacing:-0.100px;">Ln : 236</div>
<div class="t" id="s2b" style="left:536.50px;top:737px;letter-spacing:-0.200px;">Col : 11</div>
<div class="t" id="s2c" style="left:584.50px;top:737px;letter-spacing:-0.175px;">Sel : 542</div>
<div class="t" id="s3" style="left:714.50px;top:737px;letter-spacing:-0.210px;">Dos\Windows</div>
<div class="t" id="s4" style="left:825.50px;top:737px;letter-spacing:-0.700px;">ANSI</div>
<div class="t" id="s5" style="left:944.50px;top:737px;letter-spacing:-0.700px;">INS</div>
<svg class="a" style="left:979px;top:739px" width="13" height="13" viewBox="979 739 13 13"><path d="M979 751.5L991.5 739M983.6 751.5L991.5 743.6M988.2 751.5L991.5 748.2" stroke="#fff" stroke-width="1.3"/><path d="M980.8 751.8L991.8 740.8M985.4 751.8L991.8 745.4M990 751.8L991.8 750" stroke="#808080" stroke-width="2"/></svg>
</body></html>
